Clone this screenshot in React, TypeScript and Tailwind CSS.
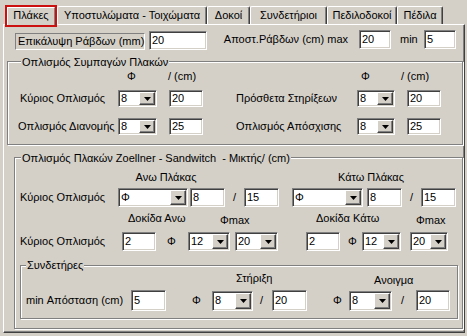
import React from "react";

const sunken =
  "border border-t-[#808080] border-l-[#808080] border-b-white border-r-white shadow-[inset_1px_1px_0_#404040,inset_-1px_-1px_0_#d4d0c8]";

function Input({ cls, v }: { cls: string; v: string }) {
  return (
    <div className={`${sunken} bg-white flex items-center pl-[2px] shrink-0 text-black ${cls}`}>
      {v}
    </div>
  );
}

function Arrow() {
  return (
    <svg width="7" height="4" viewBox="0 0 7 4">
      <polygon points="0,0 7,0 3.5,4" fill="#000" />
    </svg>
  );
}

function Combo({ cls, v }: { cls: string; v: string }) {
  return (
    <div className={`${sunken} bg-white flex items-stretch p-[1px] shrink-0 ${cls}`}>
      <div className="flex-1 flex items-center pl-[1px] text-black">{v}</div>
      <div className="w-[16px] bg-[#d4d0c8] border border-t-white border-l-white border-r-[#404040] border-b-[#404040] shadow-[inset_-1px_-1px_0_#808080] flex items-center justify-center">
        <Arrow />
      </div>
    </div>
  );
}

function Group({
  cls,
  legend,
  legendCls,
  children,
}: {
  cls: string;
  legend: string;
  legendCls: string;
  children: React.ReactNode;
}) {
  return (
    <div
      className={`relative shrink-0 border border-[#808080] shadow-[inset_1px_1px_0_#ffffff,1px_1px_0_#ffffff] ${cls}`}
    >
      <div className={`absolute bg-[#d4d0c8] px-[1px] leading-[13px] whitespace-pre ${legendCls}`}>{legend}</div>
      {children}
    </div>
  );
}

function Tab({ cls, label }: { cls: string; label: string }) {
  return (
    <div
      className={`h-[18px] shrink-0 flex items-center justify-center border-t border-l border-r border-t-white border-l-white border-r-[#404040] shadow-[inset_-1px_0_0_#808080] rounded-t-[2px] whitespace-nowrap ${cls}`}
    >
      {label}
    </div>
  );
}

export default function App() {
  return (
    <div className="w-[467px] h-[336px] bg-[#d4d0c8] overflow-hidden font-['Liberation_Sans',Arial,sans-serif] text-[11px] leading-[13px] text-black">
      {/* Tab strip */}
      <div className="h-[24px] flex items-end">
        <div className="ml-[5px] self-start mt-[5px] w-[52px] h-[22px] -mb-[3px] relative z-10 border-2 border-[#cc1010] bg-[#d4d0c8] shrink-0">
          <div className="w-full h-full border-t border-l border-r border-t-white border-l-white border-r-[#808080] flex justify-center items-start pt-[1px]">
            Πλάκες
          </div>
        </div>
        <Tab cls="w-[150px]" label="Υποστυλώματα - Τοιχώματα" />
        <Tab cls="w-[43px]" label="Δοκοί" />
        <Tab cls="w-[77px]" label="Συνδετήριοι" />
        <Tab cls="w-[70px]" label="Πεδιλοδοκοί" />
        <Tab cls="w-[46px]" label="Πέδιλα" />
      </div>

      {/* Panel */}
      <div className="ml-[3px] w-[462px] h-[309px] border border-t-white border-l-white border-r-[#404040] border-b-[#404040] shadow-[inset_-1px_-1px_0_#808080] flex flex-col">
        {/* Row 1 */}
        <div className="mt-[5px] h-[20px] flex items-end">
          <div className="ml-[11px] w-[130px] h-[17px] border border-t-[#808080] border-l-[#808080] border-b-white border-r-white flex items-center pl-[2px] whitespace-nowrap shrink-0">
            Επικάλυψη Ράβδων (mm)
          </div>
          <Input cls="ml-[4px] w-[58px] h-[19px]" v="20" />
          <div className="w-[141px] h-[19px] flex items-center justify-end whitespace-nowrap shrink-0 mb-[1px]">
            Αποστ.Ράβδων (cm) max
          </div>
          <Input cls="ml-[11px] w-[32px] h-[19px] mb-[1px]" v="20" />
          <div className="w-[33px] h-[19px] flex items-center pl-[9px] shrink-0 mb-[1px]">min</div>
          <Input cls="w-[32px] h-[19px] mb-[1px]" v="5" />
        </div>

        {/* Group 1 */}
        <Group cls="ml-[3px] mt-[11px] w-[456px] h-[84px]" legend="Οπλισμός Συμπαγών Πλακών" legendCls="left-[13px] -top-[6px]">
          <div className="mt-[8px] h-[13px] flex">
            <div className="w-[119px] shrink-0" />
            <div className="w-[41px] shrink-0">Φ</div>
            <div className="w-[193px] shrink-0">/ (cm)</div>
            <div className="w-[40px] shrink-0">Φ</div>
            <div className="shrink-0">/ (cm)</div>
          </div>
          <div className="mt-[7px] h-[17px] flex items-center">
            <div className="pl-[12px] w-[110px] shrink-0 whitespace-nowrap">Κύριος Οπλισμός</div>
            <Combo cls="w-[39px] h-[17px]" v="8" />
            <Input cls="ml-[12px] w-[34px] h-[17px]" v="20" />
            <div className="ml-[33px] w-[121px] shrink-0 whitespace-nowrap">Πρόσθετα Στηρίξεων</div>
            <Combo cls="w-[38px] h-[17px]" v="8" />
            <Input cls="ml-[12px] w-[34px] h-[17px]" v="20" />
          </div>
          <div className="mt-[11px] h-[17px] flex items-center">
            <div className="pl-[10px] w-[110px] shrink-0 whitespace-nowrap">Οπλισμός Διανομής</div>
            <Combo cls="w-[39px] h-[17px]" v="8" />
            <Input cls="ml-[12px] w-[34px] h-[17px]" v="25" />
            <div className="ml-[33px] w-[121px] shrink-0 whitespace-nowrap">Οπλισμός Απόσχισης</div>
            <Combo cls="w-[38px] h-[17px]" v="8" />
            <Input cls="ml-[12px] w-[34px] h-[17px]" v="25" />
          </div>
        </Group>

        {/* Group 2 */}
        <Group
          cls="ml-[10px] mt-[12px] w-[449px] h-[172px]"
          legend="Οπλισμός Πλακών Zoellner - Sandwitch  - Μικτής/ (cm)"
          legendCls="left-[6px] -top-[6px]"
        >
          <div className="mt-[13px] h-[13px] flex">
            <div className="w-[111px] shrink-0" />
            <div className="w-[80px] shrink-0 text-center whitespace-nowrap">Ανω Πλάκας</div>
            <div className="w-[125px] shrink-0" />
            <div className="w-[80px] shrink-0 text-center whitespace-nowrap">Κάτω Πλάκας</div>
          </div>
          <div className="mt-[4px] h-[19px] flex items-center">
            <div className="pl-[5px] w-[103px] shrink-0 whitespace-nowrap">Κύριος Οπλισμός</div>
            <Combo cls="w-[70px] h-[19px]" v="Φ" />
            <Input cls="ml-[2px] w-[35px] h-[19px]" v="8" />
            <div className="w-[19px] shrink-0 text-center">/</div>
            <Input cls="w-[35px] h-[19px]" v="15" />
            <Combo cls="ml-[13px] w-[71px] h-[19px]" v="Φ" />
            <Input cls="ml-[4px] w-[35px] h-[19px]" v="8" />
            <div className="w-[19px] shrink-0 text-center">/</div>
            <Input cls="w-[35px] h-[19px]" v="15" />
          </div>
          <div className="mt-[5px] h-[15px] flex">
            <div className="w-[113px] shrink-0" />
            <div className="w-[92px] shrink-0 whitespace-nowrap">Δοκίδα Ανω</div>
            <div className="w-[96px] shrink-0 pt-[2px]">Φmax</div>
            <div className="w-[100px] shrink-0 whitespace-nowrap">Δοκίδα Κάτω</div>
            <div className="shrink-0 pt-[2px]">Φmax</div>
          </div>
          <div className="mt-[5px] h-[19px] flex items-center">
            <div className="pl-[5px] w-[107px] shrink-0 whitespace-nowrap">Κύριος Οπλισμός</div>
            <Input cls="w-[34px] h-[19px]" v="2" />
            <div className="w-[32px] pl-[11px] shrink-0">Φ</div>
            <Combo cls="w-[42px] h-[19px]" v="12" />
            <Combo cls="ml-[5px] w-[43px] h-[19px]" v="20" />
            <Input cls="ml-[28px] w-[34px] h-[19px]" v="2" />
            <div className="w-[22px] pl-[8px] shrink-0">Φ</div>
            <Combo cls="w-[39px] h-[19px]" v="12" />
            <Combo cls="ml-[9px] w-[38px] h-[19px]" v="20" />
          </div>

          {/* Subgroup */}
          <Group cls="ml-[5px] mt-[14px] w-[438px] h-[54px]" legend="Συνδετήρες" legendCls="left-[5px] -top-[7px]">
            <div className="mt-[6px] h-[13px] flex">
              <div className="w-[215px] shrink-0" />
              <div className="w-[138px] shrink-0 whitespace-nowrap">Στήριξη</div>
              <div className="shrink-0 pt-[2px] whitespace-nowrap">Ανοιγμα</div>
            </div>
            <div className="mt-[5px] h-[21px] flex items-center">
              <div className="pl-[5px] w-[110px] shrink-0 whitespace-nowrap">min Απόσταση (cm)</div>
              <Input cls="w-[35px] h-[21px]" v="5" />
              <div className="w-[46px] pl-[26px] shrink-0">Φ</div>
              <Combo cls="w-[41px] h-[20px]" v="8" />
              <div className="w-[19px] pl-[7px] shrink-0">/</div>
              <Input cls="w-[35px] h-[21px]" v="20" />
              <div className="w-[42px] pl-[26px] shrink-0">Φ</div>
              <Combo cls="w-[43px] h-[20px]" v="8" />
              <div className="w-[24px] pl-[9px] shrink-0">/</div>
              <Input cls="w-[34px] h-[21px]" v="20" />
            </div>
          </Group>
        </Group>
      </div>
    </div>
  );
}
